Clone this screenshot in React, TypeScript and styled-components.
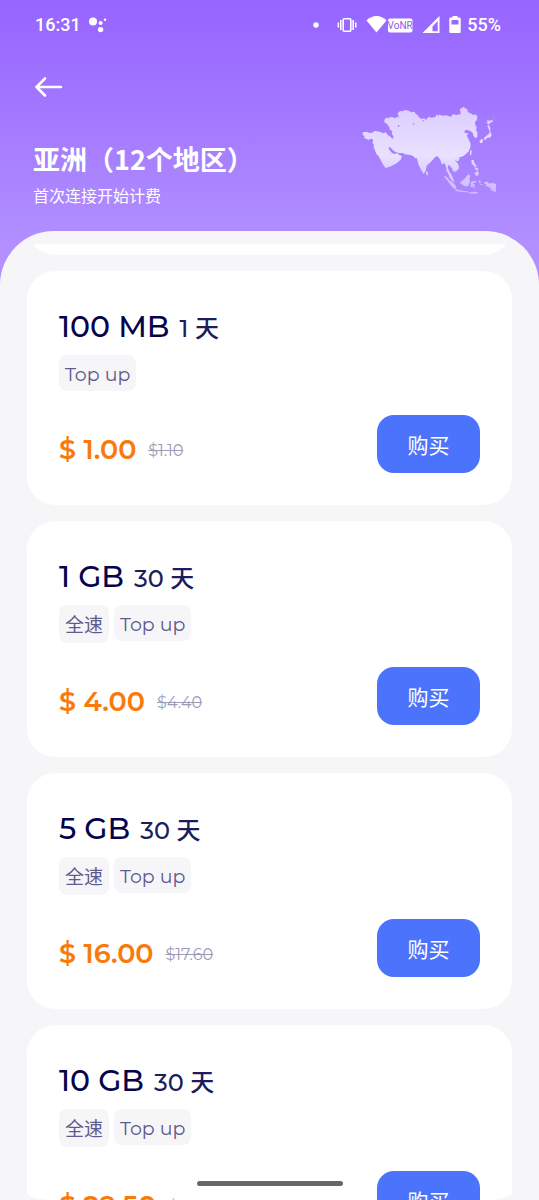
import styled, { createGlobalStyle } from "styled-components";

const GlobalStyle = createGlobalStyle`
  * {
    box-sizing: border-box;
  }

  body {
    margin: 0;
    background: #f6f6f9;
    font-family: Montserrat, Inter, "Noto Sans CJK SC", sans-serif;
  }
`;

const Screen = styled.div`
  height: 100vh;
  display: flex;
  flex-direction: column;
  overflow: hidden;
  background: linear-gradient(#9664ff 0, #b18fff 240px, #b592ff 290px);
`;

const StatusBar = styled.div`
  display: flex;
  align-items: center;
  justify-content: space-between;
  height: 50px;
  padding: 0 38px 0 35px;
  color: #fff;
  font: 500 18px/24px Roboto, sans-serif;
`;

const StatusGroup = styled.div`
  display: flex;
  align-items: center;
  gap: 6px;
`;

const Header = styled.header`
  display: flex;
  justify-content: space-between;
  align-items: flex-end;
  height: 181px;
  padding: 0 41px 0 33px;
  color: #fff;
`;

const HeaderText = styled.div`
  height: 100%;
  display: flex;
  flex-direction: column;
`;

const MapBox = styled.div`
  display: flex;
  padding-bottom: 35px;
`;

const BackButton = styled.button`
  display: flex;
  align-items: center;
  width: 32px;
  height: 32px;
  margin: 21px 0 36px;
  padding: 0;
  border: 0;
  background: none;
  color: inherit;
  cursor: pointer;
`;

const Title = styled.h1`
  margin: 0;
  font-family: "Noto Sans CJK SC", sans-serif;
  font-size: 27px;
  line-height: 40px;
  font-weight: 700;
  white-space: nowrap;
`;

const Subtitle = styled.p`
  margin: 6px 0 0;
  font-size: 16px;
  line-height: 24px;
`;

const Sheet = styled.main`
  flex: 1;
  min-height: 0;
  display: flex;
  flex-direction: column;
  padding-top: 13px;
  border-radius: 54px 54px 0 0;
  background: #f6f6f9;
`;

const PlanList = styled.div`
  flex: 1;
  min-height: 0;
  display: flex;
  flex-direction: column;
  gap: 16px;
  padding: 0 27px;
  border-radius: 0 0 50px 50px;
  overflow: hidden;
`;

const ScrolledCard = styled.div`
  flex: none;
  display: flex;
  align-items: flex-end;
  height: 11px;
  overflow: hidden;

  &:before {
    content: "";
    flex: 1;
    height: 80px;
    border-radius: 28px;
    background: #fff;
  }
`;

const Card = styled.article`
  flex: none;
  padding: 32px;
  border-radius: 28px;
  background: #fff;
`;

const PlanTitle = styled.h2`
  display: flex;
  align-items: baseline;
  gap: 10px;
  height: 52px;
  margin: 0;
  color: #04034c;
  font-size: 30px;
  line-height: 48px;
  font-weight: 500;
`;

const Duration = styled.span`
  color: #1d1c5c;
  font-size: 24px;
`;

const Tags = styled.div`
  display: flex;
  align-items: flex-start;
  gap: 5px;
`;

const Tag = styled.span<{ $tall?: boolean }>`
  padding: 4px 6px 0;
  border-radius: 8px;
  background: #f6f6f9;
  color: #5e5b8d;
  font-size: 19px;
  line-height: ${(p) => (p.$tall ? 34 : 32)}px;
`;

const CardFooter = styled.div`
  display: flex;
  align-items: center;
  justify-content: space-between;
  margin-top: 24px;
`;

const Prices = styled.div`
  display: flex;
  align-items: center;
  gap: 12px;
  padding-top: 12px;
`;

const Price = styled.strong`
  color: #f97a0a;
  font-size: 27px;
  line-height: 36px;
  font-weight: 600;
`;

const OldPrice = styled.s`
  color: #9d9bb8;
  font-size: 16px;
`;

const BuyButton = styled.button`
  width: 103px;
  height: 58px;
  padding: 4px 0 0;
  border: 0;
  border-radius: 17px;
  background: #4c73fb;
  color: #fff;
  font-family: inherit;
  font-size: 21px;
  line-height: 30px;
  cursor: pointer;
`;

const HomeBar = styled.div`
  position: fixed;
  left: 50%;
  bottom: 14px;
  width: 146px;
  height: 5px;
  border-radius: 3px;
  background: #666;
  transform: translateX(-50%);
`;

function AssistantDots() {
  return (
    <svg width="20" height="16" viewBox="-2 0 20 16" fill="#fff">
      <circle cx="4" cy="4.5" r="4" />
      <circle cx="11.6" cy="6" r="2" />
      <circle cx="11.6" cy="12.6" r="2.7" />
      <circle cx="16" cy="2.8" r="1.2" />
    </svg>
  );
}

function StatusIcons() {
  return (
    <svg width="150" height="20" viewBox="311 15 150 20" fill="#fff">
      <circle cx="316" cy="25" r="2.7" />
      <rect x="343.2" y="18.7" width="7.6" height="12.6" rx="1" fill="none" stroke="#fff" strokeWidth="1.6" />
      <path d="M340 20h1.6v10H340zM337.6 22.4h1.5v5.2h-1.5zM352.4 20h1.6v10h-1.6zM355 22.4h1.5v5.2H355z" />
      <path d="M366.5 20.5c5.5-6 14.5-6 20 0L376.5 32.5z" />
      <rect x="388" y="18.5" width="24.5" height="14" rx="2" />
      <text x="400.2" y="29" textAnchor="middle" fontFamily="Roboto, sans-serif" fontSize="10" fontWeight="400" fill="#8a5ce8">
        VoNR
      </text>
      <path d="M439.5 16v17h-17zM437.7 21l-5.2 5.5V31.3h5.2z" fillRule="evenodd" />
      <path
        d="M452.5 16h5v1.6h2q1.2 0 1.2 1.2v13q0 1.2-1.2 1.2h-9q-1.2 0-1.2-1.2v-13q0-1.2 1.2-1.2h2zM451.5 20v4.5h7v-4.5z"
        fillRule="evenodd"
      />
    </svg>
  );
}

function BackArrow() {
  return (
    <svg
      width="32"
      height="24"
      viewBox="0 0 32 24"
      fill="none"
      stroke="#fff"
      strokeWidth="2.6"
      strokeLinecap="round"
      strokeLinejoin="round"
    >
      <path d="M28 12H3.5M12 3.5L3.5 12l8.5 8.5" />
    </svg>
  );
}

function AsiaMap() {
  return (
    <svg width="136" height="90" viewBox="36 33 408 270" fill="url(#land)">
      <defs>
        <linearGradient id="land" x1="0" y1="33" x2="0" y2="303" gradientUnits="userSpaceOnUse">
          <stop offset="0" stopColor="#dccdff" />
          <stop offset="0.55" stopColor="#e9e1ff" />
          <stop offset="1" stopColor="#c9b4ff" />
        </linearGradient>
      </defs>
      {/* mainland */}
      <path d="M38 112L50 110 58 114 66 113 75 108 90 110 100 115 108 112 113 120 120 124 128 132 131 125 125 116 127 108 120 105 118 97 112 88 103 82 103 75 108 68 116 69 125 65 133 69 140 67 146 66 143 55 150 48 158 49 165 44 175 47 185 52 193 50 198 58 203 60 208 68 216 72 223 70 228 75 235 66 246 68 256 66 260 58 265 62 268 59 280 62 290 61 303 66 308 58 320 60 332 57 331 48 329 42 336 40 340 35 348 41 352 42 353 51 362 55 370 60 376 58 382 63 381 74 375 82 376 90 380 97 378 105 382 112 382 125 377 130 370 122 369 115 362 109 352 104 343 107 345 115 356 114 350 122 354 128 358 138 362 146 361 158 355 170 342 182 330 187 319 189 316 197 325 208 327 220 318 230 309 229 306 220 302 215 296 209 293 217 297 228 304 238 310 252 314 262 307 259 299 248 295 236 290 228 288 215 284 205 275 208 271 194 266 188 262 183 255 187 248 195 240 203 230 212 227 228 221 237 215 228 208 214 204 204 201 190 196 190 190 184 182 180 165 178 158 174 148 174 138 172 131 168 124 160 118 155 116 161 121 168 127 175 136 177 142 174 148 180 156 184 152 194 140 205 125 213 107 219 100 210 92 195 85 182 79 176 74 164 71 157 72 149 68 145 69 133 62 131 55 135 49 131 42 129 44 124 38 119Z" />
      {/* islands */}
      <path d="M411 74l7 3 10-3 0 6-8 4-3 5-5-4-4-1 5-4zM412 91l6 0 3 9 0 12 4 7-3 8-10 2-6 3-5-2 8-8 7-4 3-9-4-9zM394 132l6 3-3 8-5 2-4-6zM402 131l8-1-2 4-7 0zM360 167l5-1-1 12-4 4zM318 190l8-4 3 4-4 8-6 1zM229 227l5 6-1 9-5-4zM365 195l6 0 2 8 6 9 1 5-7-3-7-7-2-6zM372 216l8 3 6 2-3 6-6-3zM382 229l5 4-3 9-9 0 3-6-7 1 6-5zM281 243l8 2 9 11 12 8 8 10 1 9-10-4-9-11-9-13zM316 283l11 1 14 4 12 0 0 4-16-1-21-3zM329 262l6-3 9-8 11-13 6 5-3 7 2 11-4 10-6 4-12-5-5-4zM362 262l5-3 12 0-2 4-9 1 2 4 6-1-4 6 4 6-6-1-3-6-3 4-3-1 2-9zM355 292l10 0 8-2 12 2-5 4-12 1-12-2zM387 258l4-3 1 10-4-1zM391 268l8 0-2 3-6-1zM404 261l8-1 6 6 7-3 13 4 0 24-9-2-7-4 1-4-8-6-9-3 4-3-8-4zM430 67l3-1-1 4z" />
      {/* lakes */}
      <path d="M143 91l4-1 2 4-4 2zM188 86l5-2 0 4-5 1zM218 76l4 0 0 3-4 0z" fill="#a67dff" />
    </svg>
  );
}

const plans = [
  { data: "100 MB", days: 1, price: "1.00", oldPrice: "1.10", fullSpeed: false },
  { data: "1 GB", days: 30, price: "4.00", oldPrice: "4.40", fullSpeed: true },
  { data: "5 GB", days: 30, price: "16.00", oldPrice: "17.60", fullSpeed: true },
  { data: "10 GB", days: 30, price: "29.50", oldPrice: "32.45", fullSpeed: true },
];

function PlanCard(props: (typeof plans)[number]) {
  return (
    <Card>
      <PlanTitle>
        {props.data}
        <Duration>{props.days} 天</Duration>
      </PlanTitle>
      <Tags>
        {props.fullSpeed && <Tag $tall>全速</Tag>}
        <Tag>Top up</Tag>
      </Tags>
      <CardFooter>
        <Prices>
          <Price>$ {props.price}</Price>
          <OldPrice>${props.oldPrice}</OldPrice>
        </Prices>
        <BuyButton type="button">购买</BuyButton>
      </CardFooter>
    </Card>
  );
}

export default function App() {
  return (
    <Screen lang="zh-CN">
      <GlobalStyle />
      <StatusBar>
        <StatusGroup>
          16:31
          <AssistantDots />
        </StatusGroup>
        <StatusGroup>
          <StatusIcons />
          55%
        </StatusGroup>
      </StatusBar>
      <Header>
        <HeaderText>
          <BackButton type="button" aria-label="返回">
            <BackArrow />
          </BackButton>
          <Title>亚洲（12个地区）</Title>
          <Subtitle>首次连接开始计费</Subtitle>
        </HeaderText>
        <MapBox>
          <AsiaMap />
        </MapBox>
      </Header>
      <Sheet>
        <PlanList>
          <ScrolledCard />
          {plans.map((plan) => (
            <PlanCard key={plan.data} {...plan} />
          ))}
        </PlanList>
      </Sheet>
      <HomeBar />
    </Screen>
  );
}
